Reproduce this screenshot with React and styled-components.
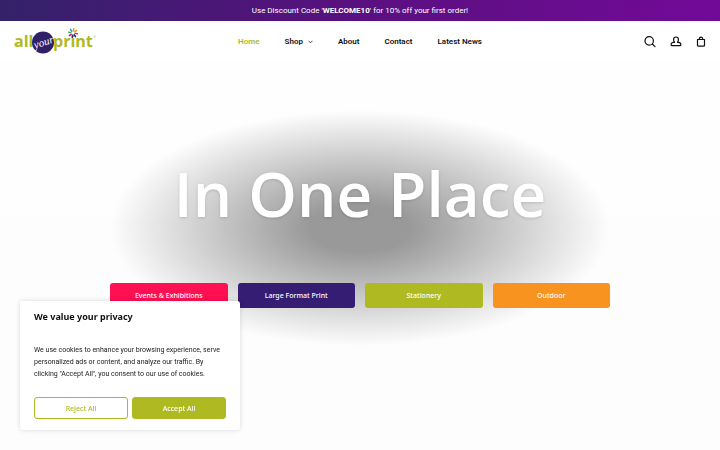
import React, { useState } from "react";
import styled, { createGlobalStyle } from "styled-components";

const GlobalStyle = createGlobalStyle`
  * {
    box-sizing: border-box;
  }

  body {
    margin: 0;
    background: #fdfdfd;
    color: #111;
    font-family: Roboto, "Liberation Sans", sans-serif;
    font-size: 8px;
  }
`;

const PromoBar = styled.div`
  padding: 5px 12px;
  background: linear-gradient(90deg, #33226a, #5a1080 50%, #720a98);
  color: #fff;
  line-height: 11px;
  text-align: center;
`;

const Header = styled.header`
  display: grid;
  grid-template-columns: 1fr auto 1fr;
  align-items: center;
  height: 41px;
  padding: 0 14px;
  background: #fff;
`;

const LogoLink = styled.a`
  justify-self: start;

  svg {
    display: block;
  }
`;

const Nav = styled.nav`
  display: flex;
  align-items: center;
  gap: 25px;
`;

const NavLink = styled.a`
  display: flex;
  align-items: center;
  gap: 5px;
  color: ${props => props.$active ? '#afba22' : '#111'};
  font-weight: 600;
  line-height: 12px;
  text-decoration: none;
  white-space: nowrap;
`;

const Actions = styled.div`
  display: flex;
  justify-self: end;
  align-items: center;
  gap: 14px;
`;

const IconButton = styled.button`
  padding: 0;
  border: none;
  background: none;
  color: #111;
  cursor: pointer;

  svg {
    display: block;
    fill: none;
    stroke: currentColor;
    stroke-width: 1.2;
    stroke-linejoin: round;
    stroke-linecap: round;
  }
`;

const Hero = styled.main`
  display: flex;
  justify-content: center;
  padding: 48px 20px;
  background: linear-gradient(#fefefe 155px, #fdfdfd 155px);
`;

const HeroContent = styled.section`
  width: 100%;
  max-width: 500px;
  padding: 38px 0;
  background: radial-gradient(closest-side, #999 20%, rgba(153, 153, 153, 0) 100%);
`;

const Title = styled.h1`
  margin: 0 0 45px;
  color: #fff;
  font-family: "Open Sans", "Noto Sans", sans-serif;
  font-size: 62px;
  font-weight: 600;
  line-height: 90px;
  text-align: center;
  text-shadow: 0 1px 3px rgba(0, 0, 0, 0.15);
  white-space: nowrap;
`;

const CategoryGrid = styled.div`
  display: grid;
  grid-template-columns: repeat(4, 1fr);
  gap: 10px;
`;

const CategoryLink = styled.a`
  border-radius: 3px;
  background: ${props => props.$color};
  color: #fff;
  font-family: "Noto Sans", sans-serif;
  font-size: 7px;
  font-weight: 500;
  line-height: 25px;
  text-align: center;
  text-decoration: none;
`;

const CookieCard = styled.section`
  position: fixed;
  bottom: 20px;
  left: 20px;
  width: 220px;
  padding: 10px 14px 11px;
  border-radius: 3px;
  background: #fff;
  box-shadow: 0 0 5px rgba(0, 0, 0, 0.15);
`;

const CookieTitle = styled.h2`
  margin: 0 0 21px;
  font-family: "Noto Sans", sans-serif;
  font-size: 9px;
  font-weight: 700;
  line-height: 12px;
`;

const CookieText = styled.p`
  margin: 0 0 17px;
  color: #222;
  font-size: 7px;
  line-height: 12px;
`;

const CookieActions = styled.div`
  display: flex;
  gap: 4px;
`;

const CookieButton = styled.button`
  flex: 1;
  height: 22px;
  padding: 0;
  border: 1px solid #afba22;
  border-radius: 3px;
  background: ${props => props.$primary ? '#afba22' : '#fff'};
  color: ${props => props.$primary ? '#fff' : '#afba22'};
  font-family: "Noto Sans", sans-serif;
  font-size: 7px;
  font-weight: 500;
  cursor: pointer;
`;

const links = [
  { label: "Home", active: true },
  { label: "Shop", hasMenu: true },
  { label: "About" },
  { label: "Contact" },
  { label: "Latest News" },
];

const categories = [
  { label: "Events & Exhibitions", color: "#ff1053" },
  { label: "Large Format Print", color: "#341d73" },
  { label: "Stationery", color: "#afba22" },
  { label: "Outdoor", color: "#f8931f" },
];

const rays = ["#f7931e", "#f7931e", "#e5322d", "#341d73", "#341d73", "#c2185b", "#3aa76d", "#1d9ad6"];

const Logo = () => (
  <svg width="82" height="28" viewBox="0 0 82 28" role="img" aria-label="All Your Print">
    <g fill="#afba22" fontFamily="Open Sans, sans-serif" fontWeight="700" fontSize="16">
      <text x="0" y="19">all</text>
      <text x="39" y="19">print</text>
    </g>
    <circle cx="29" cy="14.5" r="11" fill="#2f2068" />
    <text
      x="20"
      y="18"
      fill="#fff"
      fontFamily="Liberation Serif, serif"
      fontStyle="italic"
      fontSize="11"
      transform="rotate(-18 29 16)"
    >
      your
    </text>
    {rays.map((color, index) => (
      <path
        key={index}
        d="M59 2.8V0.6"
        stroke={color}
        strokeWidth="1.5"
        strokeLinecap="round"
        transform={`rotate(${index * 45 + 10} 59 5)`}
      />
    ))}
    <circle cx="80.5" cy="8.5" r="0.8" fill="none" stroke="#afba22" strokeWidth="0.4" />
  </svg>
);

const Chevron = () => (
  <svg width="5" height="4" viewBox="0 0 5 4" fill="none" stroke="currentColor" strokeWidth="0.8">
    <path d="M0.5 0.8L2.5 2.8L4.5 0.8" />
  </svg>
);

const SearchIcon = () => (
  <svg width="12" height="12" viewBox="0 0 12 12">
    <circle cx="5.2" cy="4.9" r="4.2" />
    <path d="M8.3 8L11 10.7" />
  </svg>
);

const AccountIcon = () => (
  <svg width="12" height="12" viewBox="0 0 12 12">
    <path d="M4.5 6.3C3.8 5.5 3.6 4.7 3.6 3.6C3.6 2 4.5 1 6 1S8.4 2 8.4 3.6C8.4 4.7 8.2 5.5 7.5 6.3" />
    <path d="M4.5 6.3H3.6C2 6.3 1.2 7.1 1.2 8.4V8.9Q1.2 9.7 2 9.7H10Q10.8 9.7 10.8 8.9V8.4C10.8 7.1 10 6.3 8.4 6.3H7.5" />
  </svg>
);

const BagIcon = () => (
  <svg width="10" height="12" viewBox="0 0 10 12">
    <path d="M1.5 3.5H8.5V9.2Q8.5 10.2 7.5 10.2H2.5Q1.5 10.2 1.5 9.2Z" />
    <path d="M3.3 3.5C3.3 0.3 6.7 0.3 6.7 3.5" />
  </svg>
);

const App = () => {
  const [showCookies, setShowCookies] = useState(true);

  return (
    <>
      <GlobalStyle />
      <PromoBar>
        Use Discount Code '<b>WELCOME10</b>' for 10% off your first order!
      </PromoBar>
      <Header>
        <LogoLink href="#">
          <Logo />
        </LogoLink>
        <Nav>
          {links.map((link) => (
            <NavLink key={link.label} href="#" $active={link.active}>
              {link.label}
              {link.hasMenu && <Chevron />}
            </NavLink>
          ))}
        </Nav>
        <Actions>
          <IconButton aria-label="Search"><SearchIcon /></IconButton>
          <IconButton aria-label="Account"><AccountIcon /></IconButton>
          <IconButton aria-label="Cart"><BagIcon /></IconButton>
        </Actions>
      </Header>
      <Hero>
        <HeroContent>
          <Title>In One Place</Title>
          <CategoryGrid>
            {categories.map((category) => (
              <CategoryLink key={category.label} href="#" $color={category.color}>
                {category.label}
              </CategoryLink>
            ))}
          </CategoryGrid>
        </HeroContent>
      </Hero>
      {showCookies && (
        <CookieCard aria-label="Cookie consent">
          <CookieTitle>We value your privacy</CookieTitle>
          <CookieText>
            We use cookies to enhance your browsing experience, serve personalized
            ads or content, and analyze our traffic. By clicking "Accept All", you
            consent to our use of cookies.
          </CookieText>
          <CookieActions>
            <CookieButton onClick={() => setShowCookies(false)}>Reject All</CookieButton>
            <CookieButton $primary onClick={() => setShowCookies(false)}>Accept All</CookieButton>
          </CookieActions>
        </CookieCard>
      )}
    </>
  );
};

export default App;
